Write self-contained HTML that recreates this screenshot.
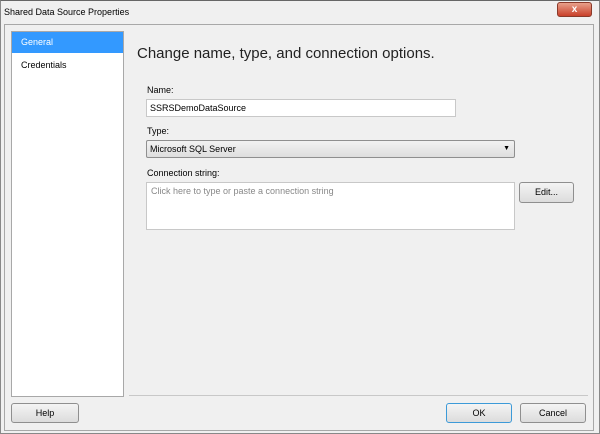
<!DOCTYPE html>
<html><head><style>
body{margin:0;width:600px;height:434px;background:#f0f0f0;font-family:"Liberation Sans",sans-serif;font-size:9px;color:#000;position:relative;overflow:hidden}
.a{position:absolute;box-sizing:border-box}
.btn{position:absolute;box-sizing:border-box;border:1px solid #8f8f8f;border-radius:3px;background:linear-gradient(#f4f4f4,#dcdcdc);text-align:center;font-size:9px;line-height:18px}
</style></head><body>
<div class="a" style="left:0;top:0;width:600px;height:434px;border:1px solid #888;border-top-color:#666"></div>
<div class="a" style="left:4px;top:7px">Shared Data Source Properties</div>
<div class="a" style="left:557px;top:2px;width:35px;height:15px;border-radius:3px;background:linear-gradient(#e8a08a,#c9402a);border:1px solid #8a3a2a;color:#fff;text-align:center;font-size:10px;line-height:13px;font-weight:bold">x</div>
<div class="a" style="left:4px;top:24px;width:590px;height:407px;border:1px solid #a8a8a8"></div>
<div class="a" style="left:11px;top:31px;width:113px;height:366px;background:#fff;border:1px solid #a8a8a8"></div>
<div class="a" style="left:12px;top:32px;width:111px;height:21px;background:#3399ff;color:#fff;padding-left:9px;line-height:21px">General</div>
<div class="a" style="left:21px;top:60px">Credentials</div>
<div class="a" style="left:137px;top:45px;font-size:15px;color:#222">Change name, type, and connection options.</div>
<div class="a" style="left:147px;top:85px">Name:</div>
<div class="a" style="left:146px;top:99px;width:310px;height:18px;background:#fff;border:1px solid #c8c8c8;padding-left:3px;line-height:16px">SSRSDemoDataSource</div>
<div class="a" style="left:147px;top:126px">Type:</div>
<div class="a" style="left:146px;top:140px;width:369px;height:18px;background:linear-gradient(#f2f2f2,#dedede);border:1px solid #8f8f8f;border-radius:2px;padding-left:3px;line-height:16px">Microsoft SQL Server<span style="position:absolute;right:4px;top:0;font-size:7px">▼</span></div>
<div class="a" style="left:147px;top:168px">Connection string:</div>
<div class="a" style="left:146px;top:182px;width:369px;height:48px;background:#fff;border:1px solid #c8c8c8;padding:3px 4px;color:#888">Click here to type or paste a connection string</div>
<div class="btn" style="left:519px;top:182px;width:55px;height:21px">Edit...</div>
<div class="a" style="left:129px;top:395px;width:459px;height:1px;background:#c8c8c8"></div>
<div class="btn" style="left:11px;top:403px;width:68px;height:20px">Help</div>
<div class="btn" style="left:446px;top:403px;width:66px;height:20px;border-color:#3c9ad8">OK</div>
<div class="btn" style="left:520px;top:403px;width:66px;height:20px">Cancel</div>
</body></html>
